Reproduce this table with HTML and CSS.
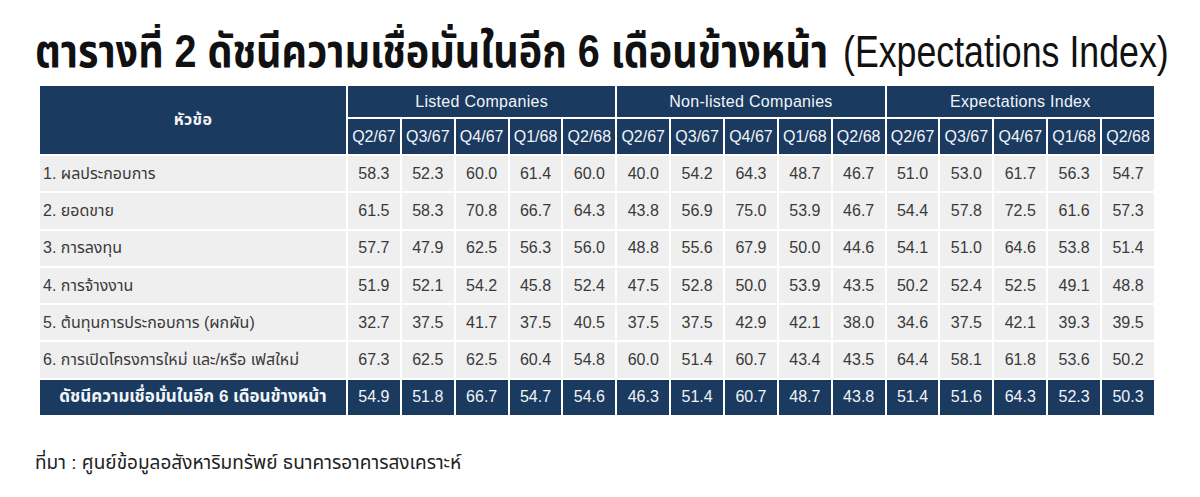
FILE: index.html
```html
<!DOCTYPE html>
<html lang="th">
<head>
<meta charset="utf-8">
<title>ตารางที่ 2</title>
<link rel="stylesheet" href="styles.css">
</head>
<body>
<div class="page">
  <h1 class="title"><span class="th">ตารางที่ 2 ดัชนีความเชื่อมั่นในอีก 6 เดือนข้างหน้า</span> <span class="en">(Expectations Index)</span></h1>
  <table class="grid">
    <colgroup>
      <col class="c-label">
      <col span="15">
    </colgroup>
    <thead>
      <tr class="h1">
        <th rowspan="2" class="topic">หัวข้อ</th>
        <th colspan="5">Listed Companies</th>
        <th colspan="5">Non-listed Companies</th>
        <th colspan="5">Expectations Index</th>
      </tr>
      <tr class="h2">
        <th>Q2/67</th><th>Q3/67</th><th>Q4/67</th><th>Q1/68</th><th>Q2/68</th>
        <th>Q2/67</th><th>Q3/67</th><th>Q4/67</th><th>Q1/68</th><th>Q2/68</th>
        <th>Q2/67</th><th>Q3/67</th><th>Q4/67</th><th>Q1/68</th><th>Q2/68</th>
      </tr>
    </thead>
    <tbody>
      <tr><td class="lbl">1. ผลประกอบการ</td><td>58.3</td><td>52.3</td><td>60.0</td><td>61.4</td><td>60.0</td><td>40.0</td><td>54.2</td><td>64.3</td><td>48.7</td><td>46.7</td><td>51.0</td><td>53.0</td><td>61.7</td><td>56.3</td><td>54.7</td></tr>
      <tr><td class="lbl">2. ยอดขาย</td><td>61.5</td><td>58.3</td><td>70.8</td><td>66.7</td><td>64.3</td><td>43.8</td><td>56.9</td><td>75.0</td><td>53.9</td><td>46.7</td><td>54.4</td><td>57.8</td><td>72.5</td><td>61.6</td><td>57.3</td></tr>
      <tr><td class="lbl">3. การลงทุน</td><td>57.7</td><td>47.9</td><td>62.5</td><td>56.3</td><td>56.0</td><td>48.8</td><td>55.6</td><td>67.9</td><td>50.0</td><td>44.6</td><td>54.1</td><td>51.0</td><td>64.6</td><td>53.8</td><td>51.4</td></tr>
      <tr><td class="lbl">4. การจ้างงาน</td><td>51.9</td><td>52.1</td><td>54.2</td><td>45.8</td><td>52.4</td><td>47.5</td><td>52.8</td><td>50.0</td><td>53.9</td><td>43.5</td><td>50.2</td><td>52.4</td><td>52.5</td><td>49.1</td><td>48.8</td></tr>
      <tr><td class="lbl">5. ต้นทุนการประกอบการ (ผกผัน)</td><td>32.7</td><td>37.5</td><td>41.7</td><td>37.5</td><td>40.5</td><td>37.5</td><td>37.5</td><td>42.9</td><td>42.1</td><td>38.0</td><td>34.6</td><td>37.5</td><td>42.1</td><td>39.3</td><td>39.5</td></tr>
      <tr><td class="lbl">6. การเปิดโครงการใหม่ และ/หรือ เฟสใหม่</td><td>67.3</td><td>62.5</td><td>62.5</td><td>60.4</td><td>54.8</td><td>60.0</td><td>51.4</td><td>60.7</td><td>43.4</td><td>43.5</td><td>64.4</td><td>58.1</td><td>61.8</td><td>53.6</td><td>50.2</td></tr>
      <tr class="total"><td class="tlbl">ดัชนีความเชื่อมั่นในอีก 6 เดือนข้างหน้า</td><td>54.9</td><td>51.8</td><td>66.7</td><td>54.7</td><td>54.6</td><td>46.3</td><td>51.4</td><td>60.7</td><td>48.7</td><td>43.8</td><td>51.4</td><td>51.6</td><td>64.3</td><td>52.3</td><td>50.3</td></tr>
    </tbody>
  </table>
  <p class="source">ที่มา : ศูนย์ข้อมูลอสังหาริมทรัพย์ ธนาคารอาคารสงเคราะห์</p>
</div>
</body>
</html>
```

FILE: styles.css
```css
html, body {
  margin: 0;
  padding: 0;
  background: #ffffff;
  overflow: hidden;
}
body {
  font-family: "Liberation Sans", "Noto Sans Thai", "Noto Sans", sans-serif;
  color: #333333;
}
.page {
  padding: 24px 0 0 35px;
}
.title {
  margin: 0 0 6px 0;
  font-size: 44px;
  font-weight: normal;
  line-height: 54px;
  height: 54px;
  color: #111111;
  white-space: nowrap;
  overflow: hidden;
}
.title .th {
  display: inline-block;
  font-size: 46px;
  font-weight: bold;
  transform: scaleX(0.858);
  transform-origin: left center;
  margin-right: -129px;
}
.title .en {
  display: inline-block;
  font-size: 44px;
  transform: scaleX(0.812);
  transform-origin: left center;
  margin-right: -76px;
}
.grid {
  margin-left: 3px;
  border-collapse: separate;
  border-spacing: 2px;
  table-layout: fixed;
  width: 1118px;
  font-size: 16px;
}
.c-label {
  width: 306px;
}
.grid th {
  background: #1a3a60;
  color: #f2f4f8;
  font-weight: normal;
  padding: 0;
  text-align: center;
  white-space: nowrap;
}
.h1 th {
  height: 31px;
  letter-spacing: 0.3px;
}
.h2 th {
  height: 35px;
}
.grid th.topic {
  font-weight: bold;
}
.grid td {
  background: #efefef;
  height: 35.3px;
  padding: 0;
  text-align: center;
  color: #3a3a3a;
  white-space: nowrap;
}
.grid td.lbl {
  text-align: left;
  padding-left: 3px;
}
.total td {
  background: #1a3a60;
  color: #f2f4f8;
}
.total td.tlbl {
  font-weight: bold;
  font-size: 17px;
}
.source {
  margin: 32px 0 0 0;
  font-size: 19px;
  color: #222222;
}
```
